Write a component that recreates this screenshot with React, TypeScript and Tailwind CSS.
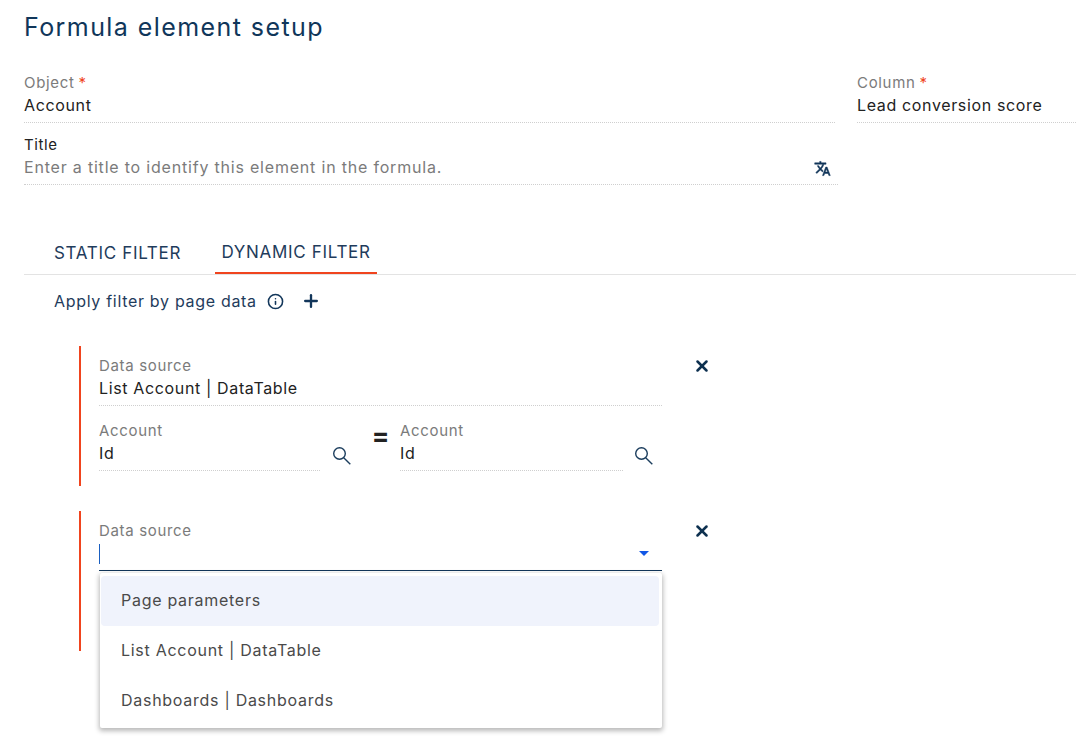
import { Info, Plus, X } from "lucide-react";

function Field({
  label,
  value,
  required,
  className = "",
}: {
  label: string;
  value: string;
  required?: boolean;
  className?: string;
}) {
  return (
    <div className={className}>
      <div className="h-[22px] text-[15px] leading-[22px] tracking-[0.045em] text-[#7b7b7b]">
        {label}
        {required && <span className="ml-1 text-[#f0441e]">*</span>}
      </div>
      <div className="h-[22px] text-[16px] leading-[22px] tracking-[0.04em] text-[#222222]">{value}</div>
      <div className="mt-[6px] border-b border-dotted border-[#cfcfcf]" />
    </div>
  );
}

function RemoveButton() {
  return <X className="mt-[11px] ml-[31px] h-[18px] w-[18px] text-[#0e3150]" strokeWidth={3.4} />;
}

function SearchIcon() {
  return (
    <svg viewBox="0 0 18 18" fill="none" stroke="#1b3d5d" strokeWidth={1.4} className="mb-[6px] h-[18px] w-[18px]">
      <circle cx="6.5" cy="6.5" r="5.8" />
      <path d="M10.7 10.7L17.3 17.3" />
    </svg>
  );
}

function TranslateIcon() {
  return (
    <svg viewBox="0 0 24 24" fill="currentColor" stroke="currentColor" strokeWidth={0.7} className="mt-[2px] h-[17px] w-[17px] text-[#12365a]">
      <path d="M12.87 15.07l-2.54-2.51.03-.03c1.74-1.94 2.98-4.17 3.71-6.53H17V4h-7V2H8v2H1v1.99h11.17C11.5 7.92 10.44 9.75 9 11.35 8.07 10.32 7.3 9.19 6.69 8h-2c.73 1.63 1.73 3.17 2.98 4.56l-5.09 5.02L4 19l5-5 3.11 3.11.76-2.04zM18.5 10h-2L12 22h2l1.12-3h4.75L21 22h2l-4.5-12zm-2.62 7l1.62-4.33L19.12 17h-3.24z" />
    </svg>
  );
}

export default function App() {
  return (
    <div className="relative h-[741px] overflow-hidden bg-white pl-6 font-['Inter',sans-serif]">
      <h1 className="pt-[11px] text-[25px] leading-[32px] font-normal tracking-[0.057em] text-[#10365a]">
        Formula element setup
      </h1>

      <div className="mt-[29px] flex gap-[22px]">
        <Field label="Object" value="Account" required className="w-[811px]" />
        <Field label="Column" value="Lead conversion score" required className="flex-1" />
      </div>

      <div className="mt-[11px] w-[814px]">
        <div className="h-[22px] text-[15px] leading-[22px] tracking-[0.04em] text-[#222222]">Title</div>
        <div className="flex h-[22px] items-center justify-between pr-[7px]">
          <span className="text-[16px] leading-[22px] tracking-[0.05em] text-[#7b7b7b]">
            Enter a title to identify this element in the formula.
          </span>
          <TranslateIcon />
        </div>
        <div className="mt-[6px] border-b border-dotted border-[#cfcfcf]" />
      </div>

      {/* Tabs */}
      <div className="mt-[45px] flex h-[45px] border-b border-[#e3e3e3] pl-[24px] text-[17px] tracking-[0.04em] text-[#1f3c5c]">
        <div className="flex h-[44px] w-[167px] items-center pt-[3px] pl-[6px]">STATIC FILTER</div>
        <div className="flex h-[44px] w-[162px] items-center justify-center border-b-2 border-[#f0441e] pt-[3px]">
          DYNAMIC FILTER
        </div>
      </div>

      <div className="mt-[14px] ml-[30px] flex h-[24px] items-center text-[16px] tracking-[0.043em] text-[#1f3c5c]">
        Apply filter by page data
        <Info className="ml-[10px] h-[17px] w-[17px] text-[#12365a]" strokeWidth={2.2} />
        <Plus className="ml-[17px] h-[20px] w-[20px] text-[#12365a]" strokeWidth={2.8} />
      </div>

      {/* Filter 1 */}
      <div className="mt-[33px] ml-[55px] flex h-[140px] border-l-2 border-[#f0441e] pl-[18px]">
        <div className="w-[563px]">
          <Field label="Data source" value="List Account | DataTable" className="pt-[9px]" />
          <div className="mt-[14px] flex items-start">
            <div className="flex w-[262px] items-end gap-[13px]">
              <Field label="Account" value="Id" className="w-[221px]" />
              <SearchIcon />
            </div>
            <div className="w-[39px] pt-[1px] text-center text-[26px] leading-[30px] font-bold text-[#222222]">=</div>
            <div className="flex w-[262px] items-end gap-[12px]">
              <Field label="Account" value="Id" className="w-[223px]" />
              <SearchIcon />
            </div>
          </div>
        </div>
        <RemoveButton />
      </div>

      {/* Filter 2 */}
      <div className="mt-[25px] ml-[55px] flex h-[140px] border-l-2 border-[#f0441e] pl-[18px]">
        <div className="relative w-[563px] pt-[9px]">
          <div className="h-[22px] text-[15px] leading-[22px] tracking-[0.045em] text-[#7b7b7b]">Data source</div>
          <div className="flex h-[29px] items-start justify-between border-b-[1.5px] border-[#12365a] pr-[13px]">
            <div className="mt-[2px] h-[20px] w-px bg-[#1a5fc0]" />
            <div className="mt-[9px] h-0 w-0 border-x-[5px] border-t-[5px] border-x-transparent border-t-[#1257e6]" />
          </div>

          {/* Dropdown */}
          <div className="absolute top-[62px] left-[1px] z-10 flex h-[155px] w-[562px] flex-col rounded-[2px] bg-white pt-[3px] pr-[3px] pl-[1px] text-[16px] tracking-[0.045em] text-[#4a4a4a] shadow-[0_2px_5px_1px_rgba(0,0,0,0.28)]">
            <div className="flex h-[50px] shrink-0 items-center rounded-[4px] bg-[#f0f3fc] pb-[2px] pl-[20px]">Page parameters</div>
            <div className="flex h-[50px] shrink-0 items-center pb-[2px] pl-[20px]">List Account | DataTable</div>
            <div className="flex h-[50px] shrink-0 items-center pb-[2px] pl-[20px]">Dashboards | Dashboards</div>
          </div>
        </div>
        <RemoveButton />
      </div>
    </div>
  );
}
